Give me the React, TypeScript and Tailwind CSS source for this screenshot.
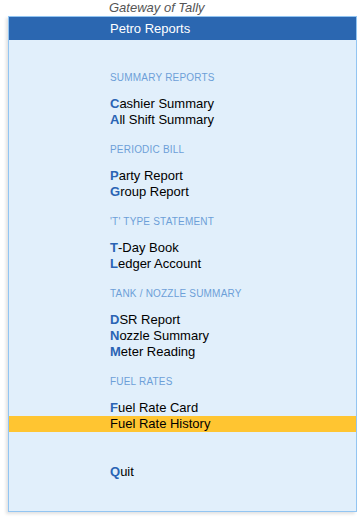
const sections = [
  { title: 'Summary Reports', items: ['Cashier Summary', 'All Shift Summary'] },
  { title: 'Periodic Bill', items: ['Party Report', 'Group Report'] },
  { title: "'T' Type Statement", items: ['T-Day Book', 'Ledger Account'] },
  { title: 'Tank / Nozzle Summary', items: ['DSR Report', 'Nozzle Summary', 'Meter Reading'] },
  { title: 'Fuel Rates', items: ['Fuel Rate Card', 'Fuel Rate History'] },
]

const selected = 'Fuel Rate History'

function MenuItem({ label }: { label: string }) {
  const active = label === selected
  return (
    <div className={`h-4 leading-4 pl-[101px] text-[13px] ${active ? 'bg-[#ffc531]' : ''}`}>
      <span className={active ? 'text-black' : 'font-bold text-[#2a64b4]'}>{label[0]}</span>
      <span className="text-black">{label.slice(1)}</span>
    </div>
  )
}

export default function App() {
  return (
    <div className="w-[362px] h-[518px] bg-white font-['Liberation_Sans',Arial,sans-serif]">
      <div className="h-4 leading-4 pl-[109px] text-[13px] italic text-[#555]">Gateway of Tally</div>
      <div className="ml-[8px] w-[349px] h-[496px] border border-[#92c5f2] bg-[#e1effb] shadow-[-2px_2px_3px_rgba(0,0,0,0.12)] flex flex-col">
        <div className="h-[23px] leading-[23px] bg-[#2b67b1] text-white text-[13px] pl-[101px]">Petro Reports</div>
        <div className="pt-[30px] flex flex-col gap-[14px]">
          {sections.map((s) => (
            <div key={s.title}>
              <div className="h-4 leading-4 pl-[101px] mb-[10px] text-[10px] uppercase tracking-[0.2px] text-[#6d9fd8]">{s.title}</div>
              {s.items.map((it) => (
                <MenuItem key={it} label={it} />
              ))}
            </div>
          ))}
        </div>
        <div className="mt-8">
          <MenuItem label="Quit" />
        </div>
      </div>
    </div>
  )
}
